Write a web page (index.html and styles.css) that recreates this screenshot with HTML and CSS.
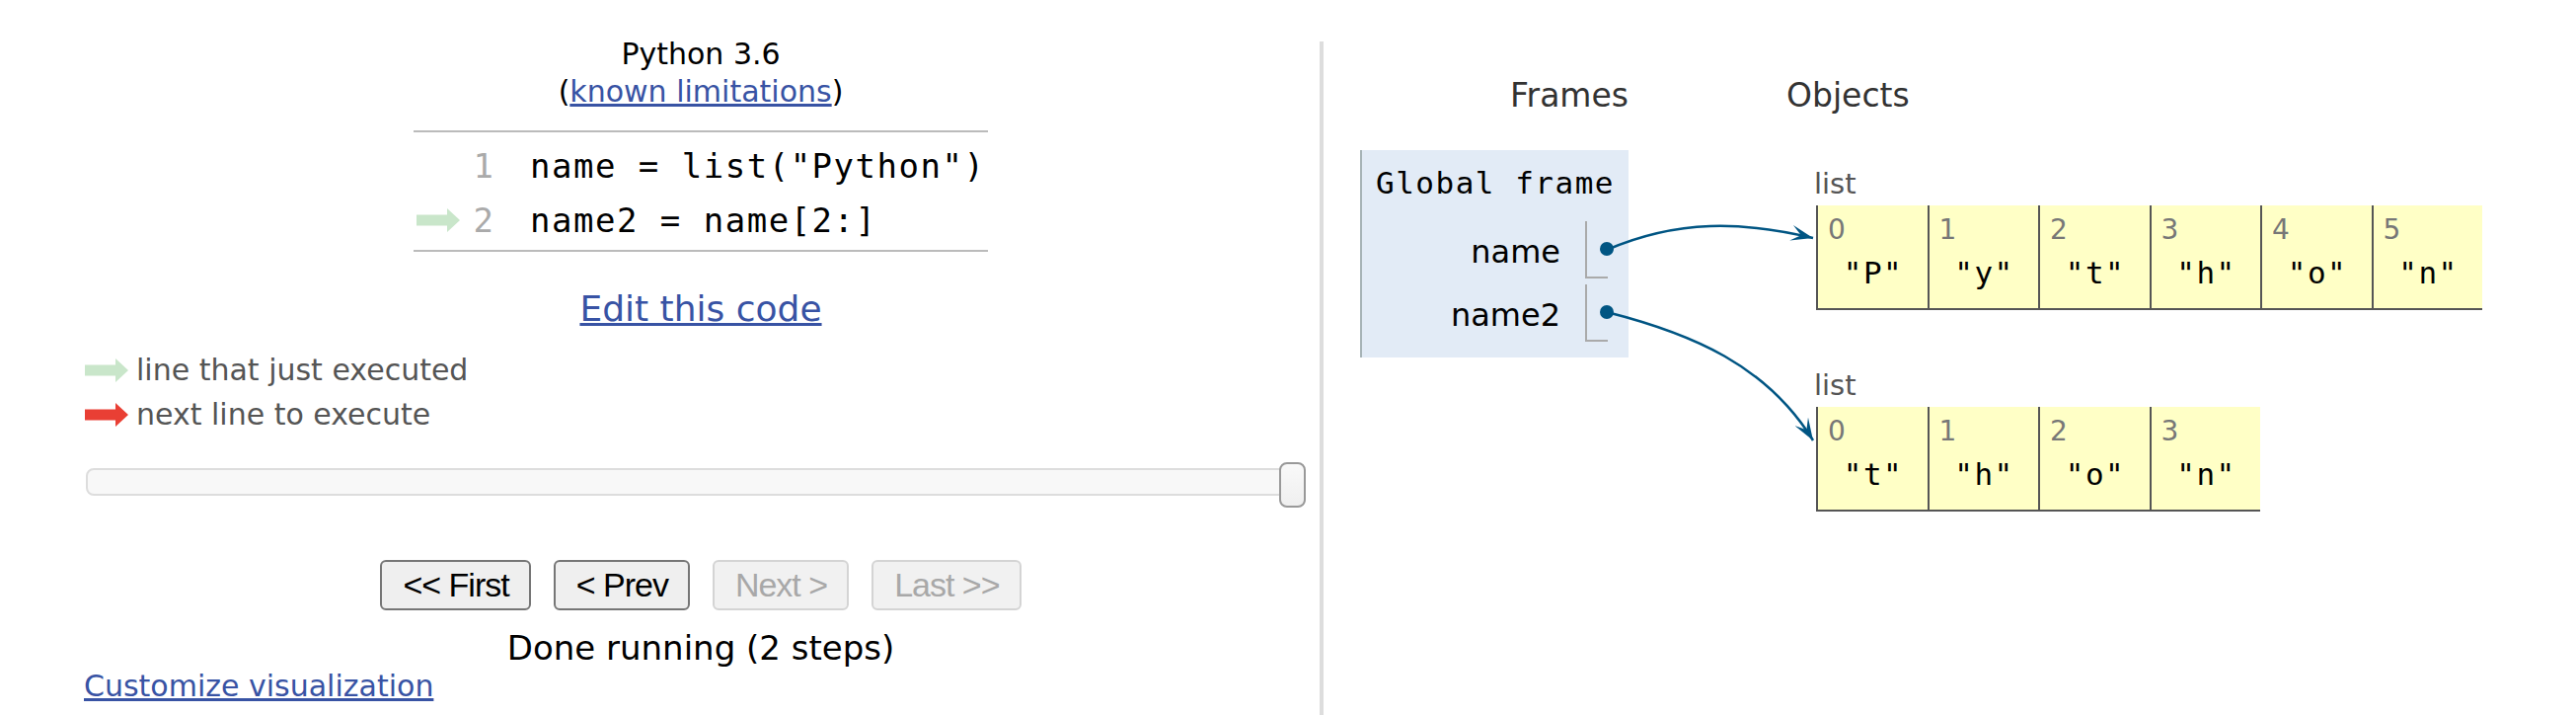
FILE: index.html
```html
<!DOCTYPE html>
<html>
<head>
<meta charset="utf-8">
<title>Python Tutor</title>
<link rel="stylesheet" href="styles.css">
</head>
<body>
<div class="page">
  <div class="left">
    <div class="title">
      <div>Python 3.6</div>
      <div>(<a href="#">known limitations</a>)</div>
    </div>
    <div class="codebox">
      <div class="row">
        <div class="gutter"></div>
        <div class="lineno">1</div>
        <div class="code">name = list("Python")</div>
      </div>
      <div class="row">
        <div class="gutter">
          <svg width="44" height="24" viewBox="0 0 44 24"><polygon points="0,6.5 31,6.5 31,0 44,12 31,24 31,17.5 0,17.5" fill="#c9e6ca"/></svg>
        </div>
        <div class="lineno">2</div>
        <div class="code">name2 = name[2:]</div>
      </div>
    </div>
    <div class="edit"><a href="#">Edit this code</a></div>
    <div class="legend">
      <div class="legend-row">
        <svg width="44" height="24" viewBox="0 0 44 24"><polygon points="0,6.5 31,6.5 31,0 44,12 31,24 31,17.5 0,17.5" fill="#c9e6ca"/></svg>
        <span>line that just executed</span>
      </div>
      <div class="legend-row">
        <svg width="44" height="24" viewBox="0 0 44 24"><polygon points="0,6.5 31,6.5 31,0 44,12 31,24 31,17.5 0,17.5" fill="#e93f34"/></svg>
        <span>next line to execute</span>
      </div>
    </div>
    <div class="slider">
      <div class="track"></div>
      <div class="handle"></div>
    </div>
    <div class="buttons">
      <button class="btn">&lt;&lt; First</button>
      <button class="btn">&lt; Prev</button>
      <button class="btn disabled">Next &gt;</button>
      <button class="btn disabled">Last &gt;&gt;</button>
    </div>
    <div class="done">Done running (2 steps)</div>
    <div class="customize"><a href="#">Customize visualization</a></div>
  </div>
  <div class="right">
    <div class="frames-col">
      <div class="hdr">Frames</div>
      <div class="frame">
        <div class="frame-title">Global frame</div>
        <div class="var first">
          <div class="var-name">name</div>
          <div class="var-val"><span class="dot"></span></div>
        </div>
        <div class="var">
          <div class="var-name">name2</div>
          <div class="var-val"><span class="dot"></span></div>
        </div>
      </div>
    </div>
    <div class="objects-col">
      <div class="hdr">Objects</div>
      <div class="obj obj1">
        <div class="obj-label">list</div>
        <div class="list">
          <div class="cell"><div class="idx">0</div><div class="val">"P"</div></div>
          <div class="cell"><div class="idx">1</div><div class="val">"y"</div></div>
          <div class="cell"><div class="idx">2</div><div class="val">"t"</div></div>
          <div class="cell"><div class="idx">3</div><div class="val">"h"</div></div>
          <div class="cell"><div class="idx">4</div><div class="val">"o"</div></div>
          <div class="cell"><div class="idx">5</div><div class="val">"n"</div></div>
        </div>
      </div>
      <div class="obj obj2">
        <div class="obj-label">list</div>
        <div class="list">
          <div class="cell"><div class="idx">0</div><div class="val">"t"</div></div>
          <div class="cell"><div class="idx">1</div><div class="val">"h"</div></div>
          <div class="cell"><div class="idx">2</div><div class="val">"o"</div></div>
          <div class="cell"><div class="idx">3</div><div class="val">"n"</div></div>
        </div>
      </div>
    </div>
  </div>
</div>
<svg class="arrows" width="2610" height="724" viewBox="0 0 2610 724">
  <defs>
    <marker id="ah" markerUnits="userSpaceOnUse" viewBox="0 0 23 16" refX="22.5" refY="8" markerWidth="23" markerHeight="16" orient="auto">
      <path d="M0,0 L22.5,8 L0,16 L10,8 Z" fill="#005583"/>
    </marker>
  </defs>
  <path d="M1628,253 C1700,222 1765,224 1837,241" fill="none" stroke="#005583" stroke-width="2.5" marker-end="url(#ah)"/>
  <path d="M1628,316 C1715,338 1790,370 1837,446" fill="none" stroke="#005583" stroke-width="2.5" marker-end="url(#ah)"/>
</svg>
</body>
</html>
```

FILE: styles.css
```css
html, body {
  margin: 0;
  padding: 0;
}
body {
  font-family: "DejaVu Sans", Verdana, sans-serif;
  color: #000;
  background: #fff;
  position: relative;
  width: 2610px;
  height: 724px;
  overflow: hidden;
}
a {
  color: #3853a4;
  text-decoration: underline;
}
.page {
  display: flex;
  height: 724px;
}
.left {
  width: 1246px;
  padding-left: 87px;
  padding-right: 4px;
  display: flex;
  flex-direction: column;
  flex: none;
}
.title {
  margin-top: 36px;
  font-size: 30px;
  line-height: 38px;
  text-align: center;
}
.codebox {
  margin: 20px auto 0;
  width: 582px;
  border-top: 2px solid #bbb;
  border-bottom: 2px solid #bbb;
  padding: 6px 0 3px;
}
.row {
  display: flex;
  align-items: center;
  height: 55px;
}
.gutter {
  width: 50px;
  height: 24px;
  display: flex;
  align-items: center;
  flex: none;
}
.gutter svg {
  margin-left: 3px;
}
.lineno {
  width: 31px;
  flex: none;
  text-align: right;
  color: #aaa;
  font-family: "DejaVu Sans Mono", monospace;
  font-size: 34px;
}
.code {
  padding-left: 37px;
  font-family: "DejaVu Sans Mono", monospace;
  font-size: 34px;
  letter-spacing: 1.5px;
  white-space: pre;
}
.edit {
  margin-top: 37px;
  text-align: center;
  font-size: 36px;
  line-height: 42px;
}
.legend {
  margin-top: 18px;
  font-size: 30px;
  line-height: 45px;
  color: #555;
}
.legend-row {
  display: flex;
  align-items: center;
}
.legend-row svg {
  margin-left: -1px;
  margin-right: 8px;
  flex: none;
}
.slider {
  margin-top: 26px;
  position: relative;
  width: 1236px;
  height: 46px;
}
.track {
  margin-top: 6px;
  height: 28px;
  box-sizing: border-box;
  border: 2px solid #ddd;
  border-radius: 8px;
  background: #f8f8f8;
}
.handle {
  position: absolute;
  right: 0;
  top: 0;
  width: 27px;
  height: 46px;
  box-sizing: border-box;
  border: 2px solid #999;
  border-radius: 8px;
  background: linear-gradient(#f9f9f9, #efefef);
}
.buttons {
  margin-top: 53px;
  display: flex;
  justify-content: center;
  gap: 23px;
}
.btn {
  height: 51px;
  margin: 0;
  padding: 0 20px 0 21px;
  box-sizing: border-box;
  border: 2px solid #767676;
  border-radius: 6px;
  background: #efefef;
  font-family: "Liberation Sans", Arial, sans-serif;
  font-size: 34px;
  letter-spacing: -1px;
  color: #000;
}
.btn.disabled {
  border-color: #d4d4d4;
  color: #a8a8a8;
  background: #f1f1f1;
}
.done {
  margin-top: 18px;
  text-align: center;
  font-size: 34px;
  line-height: 40px;
}
.customize {
  margin-top: 2px;
  margin-left: -2px;
  font-size: 30px;
  line-height: 34px;
}
.right {
  margin-top: 42px;
  border-left: 4px solid #ddd;
  flex: 1;
  display: flex;
  align-items: flex-start;
  padding-top: 36px;
}
.hdr {
  font-size: 33px;
  line-height: 38px;
  color: #333;
}
.frames-col {
  margin-left: 37px;
  width: 272px;
  flex: none;
}
.frames-col .hdr {
  text-align: right;
}
.frame {
  margin-top: 36px;
  background: #e2ebf6;
  border-left: 2px solid #a6b3b6;
  padding: 14px 21px 16px 14px;
}
.frame-title {
  font-family: "DejaVu Sans Mono", monospace;
  font-size: 31px;
  line-height: 38px;
  letter-spacing: 1.5px;
  white-space: pre;
}
.var {
  display: flex;
  justify-content: flex-end;
  height: 58px;
  margin-top: 6px;
}
.var.first {
  margin-top: 20px;
}
.var-name {
  font-size: 32px;
  line-height: 54px;
  padding-top: 4px;
  margin-right: 25px;
}
.var-val {
  width: 23px;
  box-sizing: border-box;
  border-left: 2px solid #aaa;
  border-bottom: 2px solid #aaa;
  display: flex;
  align-items: center;
}
.dot {
  width: 14px;
  height: 14px;
  border-radius: 50%;
  background: #005583;
  margin-left: 13px;
  flex: none;
}
.objects-col {
  margin-left: 160px;
}
.obj {
  margin-left: 30px;
}
.obj1 {
  margin-top: 53px;
}
.obj2 {
  margin-top: 59px;
}
.obj-label {
  font-size: 29px;
  line-height: 34px;
  color: #555;
  margin-left: -2px;
}
.list {
  display: flex;
  margin-top: 5px;
}
.cell {
  width: 112.5px;
  height: 106px;
  box-sizing: border-box;
  border-left: 2px solid #555;
  border-bottom: 2px solid #555;
  background: #ffffc6;
  padding-top: 10px;
}
.idx {
  font-size: 28px;
  line-height: 30px;
  color: #777;
  padding-left: 10px;
}
.val {
  margin-top: 10px;
  text-align: center;
  font-family: "DejaVu Sans Mono", monospace;
  font-size: 31px;
  line-height: 36px;
  letter-spacing: 1.5px;
  padding-left: 1.5px;
}
.arrows {
  position: absolute;
  left: 0;
  top: 0;
  pointer-events: none;
}
```
